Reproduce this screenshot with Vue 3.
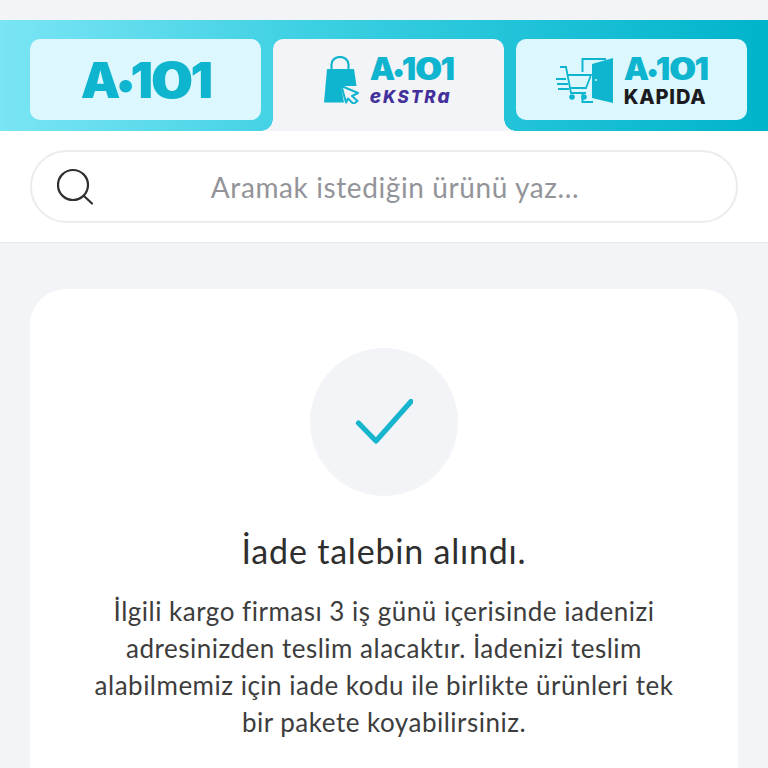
<script setup>
const lines = [
  "İlgili kargo firması 3 iş günü içerisinde iadenizi",
  "adresinizden teslim alacaktır. İadenizi teslim",
  "alabilmemiz için iade kodu ile birlikte ürünleri tek",
  "bir pakete koyabilirsiniz.",
]
</script>

<template>
  <div class="page">
    <header class="tabs">
      <a class="tab">
        <span class="logo logo-main">A<i class="dot">•</i>1<i class="zero">0</i>1</span>
      </a>
      <a class="tab active">
        <svg class="icon-bag" viewBox="0 0 36 48" width="36" height="48">
          <path d="M7.500 14V8.500a8.500 7.500 0 0 1 17 0V14" fill="none" stroke="#0fb5cf" stroke-width="2.200" />
          <path d="M3 13h27l2.500 17H17l3 16.500H0z" fill="#0fb5cf" />
          <path d="M17.500 30L34 37l-6 3 5.500 5-4 3-5.500-5.500-2 4z" fill="#f3f4f8" stroke="#0fb5cf" stroke-width="2" stroke-linejoin="round" />
        </svg>
        <span class="stack">
          <span class="logo logo-small">A<i class="dot">•</i>1<i class="zero">0</i>1</span>
          <span class="sub ekstra"><i class="big">e</i>KSTR<i class="big">a</i></span>
        </span>
      </a>
      <a class="tab">
        <svg class="icon-cart" viewBox="0 0 58 48" width="58" height="48">
          <path d="M26.500 16V3H50M26.500 38v8H37" fill="none" stroke="#0fb5cf" stroke-width="2" />
          <path d="M36 8l21-6v45l-21-5z" fill="#0fb5cf" />
          <circle cx="40" cy="24" r="1" fill="#d9f7fd" />
          <path d="M4 11h6l5 26h15M11 19h24l-5 13H14" fill="none" stroke="#0fb5cf" stroke-width="1.800" />
          <path d="M0 23h10M1 28h11M2 33h11" stroke="#0fb5cf" stroke-width="1.800" />
          <circle cx="16" cy="41" r="2.800" fill="#0fb5cf" />
          <circle cx="28" cy="41" r="2.800" fill="#0fb5cf" />
        </svg>
        <span class="stack">
          <span class="logo logo-small">A<i class="dot">•</i>1<i class="zero">0</i>1</span>
          <span class="sub kapida">KAPIDA</span>
        </span>
      </a>
    </header>

    <div class="search-row">
      <div class="search">
        <svg class="search-icon" viewBox="0 0 38 38" width="38" height="38">
          <circle cx="16" cy="17" r="15" fill="none" stroke="#2f2f2f" stroke-width="2.200" />
          <path d="M27 28l8 7.500" stroke="#2f2f2f" stroke-width="2.200" stroke-linecap="round" />
        </svg>
        <span class="placeholder">Aramak istediğin ürünü yaz...</span>
      </div>
    </div>

    <main class="content">
      <section class="card">
        <div class="circle">
          <svg viewBox="0 0 58 46" width="58" height="46">
            <path d="M3.500 24L21 42 56 2.500" fill="none" stroke="#17b4cd" stroke-width="5.200" stroke-linecap="round" stroke-linejoin="round" />
          </svg>
        </div>
        <h1 class="title">İade talebin alındı.</h1>
        <p class="text">
          <span v-for="line in lines" :key="line" class="line">{{ line }}</span>
        </p>
      </section>
    </main>
  </div>
</template>

<style scoped>
.page {
  height: 768px;
  overflow: hidden;
  background: #f3f4f8;
  padding-top: 20px;
  box-sizing: border-box;
  font-family: Lato, "Noto Sans", sans-serif;
}

.tabs {
  display: flex;
  gap: 12px;
  height: 111px;
  box-sizing: border-box;
  padding: 19px 21px 0 30px;
  background: linear-gradient(90deg, #7ae5f4 0%, #3dd0e3 40%, #00b4cb 100%);
}

.tab {
  position: relative;
  flex: 1;
  height: 81px;
  display: flex;
  align-items: center;
  justify-content: center;
  gap: 10px;
  border-radius: 10px;
  background: #dcf8fe;
}

.tab.active {
  height: 92px;
  padding-bottom: 11px;
  box-sizing: border-box;
  background: #f3f4f8;
  border-radius: 10px 10px 0 0;
}

.tab.active::before,
.tab.active::after {
  content: "";
  position: absolute;
  bottom: 0;
  width: 12px;
  height: 12px;
}

.tab.active::before {
  left: -12px;
  background: radial-gradient(circle at 0 0, transparent 11.500px, #f3f4f8 12px);
}

.tab.active::after {
  right: -12px;
  background: radial-gradient(circle at 100% 0, transparent 11.500px, #f3f4f8 12px);
}

.logo {
  font-family: Inter, sans-serif;
  font-weight: 900;
  color: #0fb5cf;
  line-height: 1;
  white-space: nowrap;
}

.dot {
  font-style: normal;
  font-size: 0.8em;
}

.zero {
  display: inline-block;
  font-style: normal;
  transform: scaleX(1.2);
  margin: 0 0.08em;
}

.logo-main {
  font-size: 50px;
  letter-spacing: -3px;
}

.logo-small {
  font-size: 32px;
  letter-spacing: -1.800px;
}

.stack {
  display: flex;
  flex-direction: column;
  gap: 2px;
}

.sub {
  height: 20px;
  line-height: 20px;
  font-family: Inter, sans-serif;
  font-weight: 800;
  white-space: nowrap;
}

.ekstra {
  font-size: 17px;
  font-style: italic;
  letter-spacing: 2px;
  color: #43309b;
}

.big {
  font-size: 19px;
}

.kapida {
  font-size: 20px;
  letter-spacing: 0.8px;
  color: #1b1b1f;
}

.search-row {
  height: 112px;
  box-sizing: border-box;
  padding-top: 19px;
  padding-inline: 30px;
  background: #fff;
  border-bottom: 1px solid #e5e7ec;
}

.search {
  position: relative;
  height: 73px;
  box-sizing: border-box;
  display: flex;
  align-items: center;
  justify-content: center;
  padding-left: 22px;
  border: 2px solid #ebecef;
  border-radius: 37px;
}

.search-icon {
  position: absolute;
  left: 25px;
  top: 16px;
}

.placeholder {
  font-size: 28px;
  letter-spacing: 0.6px;
  color: #939499;
}

.content {
  padding: 46px 30px 0;
}

.card {
  display: flex;
  flex-direction: column;
  align-items: center;
  padding: 59px 0 100px;
  background: #fff;
  border-radius: 36px;
}

.circle {
  width: 148px;
  height: 148px;
  border-radius: 50%;
  background: #f3f4f8;
  display: flex;
  align-items: center;
  justify-content: center;
}

.title {
  margin: 35px 0 0;
  font-size: 34px;
  font-weight: 400;
  letter-spacing: 0.8px;
  line-height: 40px;
  color: #2e2e2e;
}

.text {
  margin: 22px 0 0;
  font-size: 26px;
  letter-spacing: 0.5px;
  line-height: 37px;
  color: #3d3d3d;
  text-align: center;
}

.line {
  display: block;
}
</style>

<style>
html,
body {
  margin: 0;
  overflow: hidden;
}
</style>
